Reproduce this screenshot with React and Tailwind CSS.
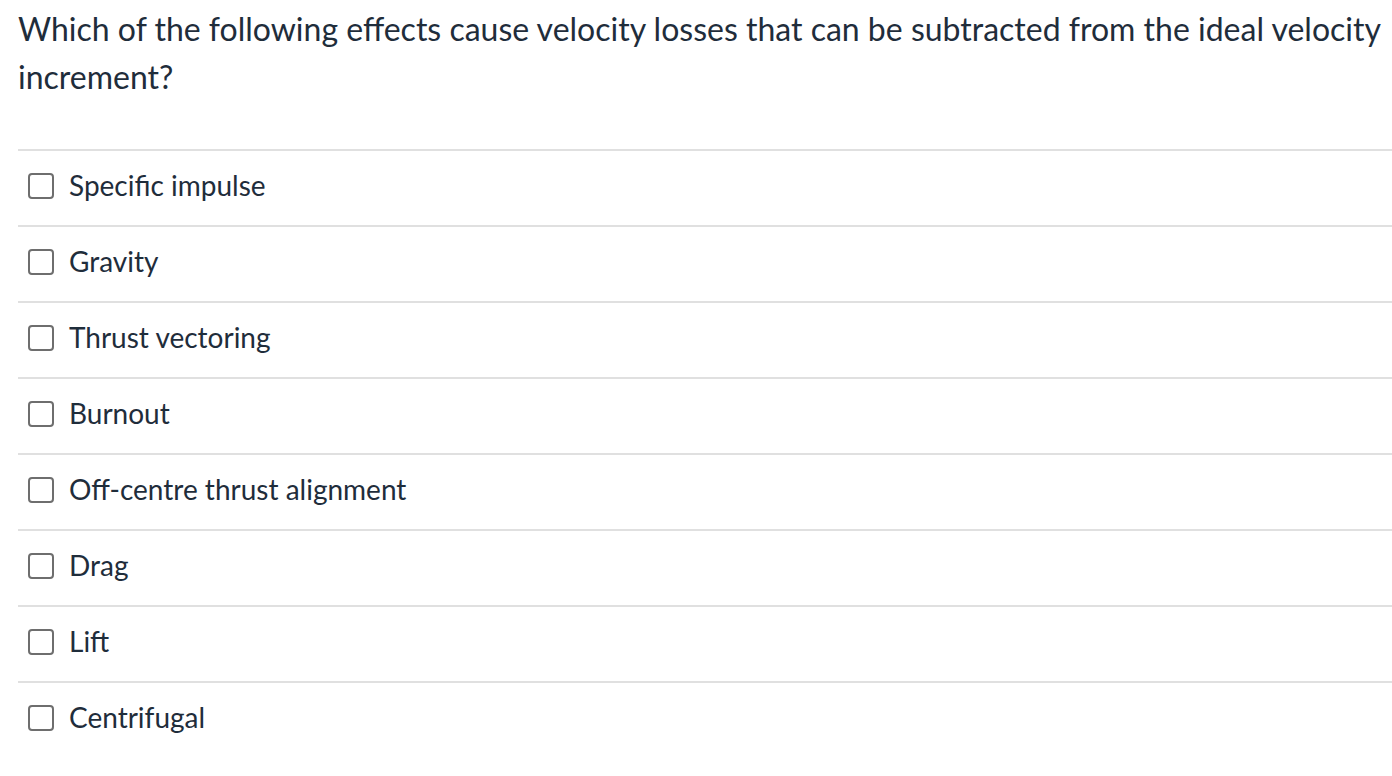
import React from 'react';

const options = [
    'Specific impulse',
    'Gravity',
    'Thrust vectoring',
    'Burnout',
    'Off-centre thrust alignment',
    'Drag',
    'Lift',
    'Centrifugal',
];

const App = () => {
    return (
        <div className="min-h-screen bg-white pl-[18px] text-[#1f2d3b]" style={{ fontFamily: 'Lato, "Noto Sans", sans-serif' }}>
            <p className="pt-[5px] text-[32px] leading-[48px]">
                Which of the following effects cause velocity losses that can be subtracted from the ideal velocity increment?
            </p>
            <div className="mt-[48px]">
                {options.map((label) => (
                    <label key={label} className="flex h-[76px] items-center gap-[15px] border-t-2 border-[#e0e0e0] pb-[6px] pl-[10px]">
                        <span className="mt-[2px] h-[26px] w-[26px] shrink-0 rounded-[4px] border-2 border-[#6e6e6e] bg-white"></span>
                        <span className="text-[28px]">{label}</span>
                    </label>
                ))}
            </div>
        </div>
    );
};

export default App;
